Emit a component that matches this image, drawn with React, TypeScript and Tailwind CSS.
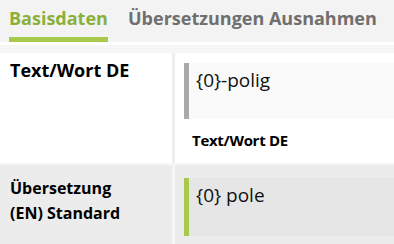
export default function App() {
  return (
    <div className="w-[394px] h-[244px] overflow-hidden bg-white" style={{ fontFamily: '"Open Sans", "Noto Sans", sans-serif' }}>
      <div className="h-[42px] bg-[#f3f3f3] flex items-stretch pl-[9px] gap-[20px]">
        <div className="flex flex-col justify-between w-[99px]">
          <div className="pt-[6px] text-[18px] leading-[24px] font-bold text-[#8bb03a] whitespace-nowrap">Basisdaten</div>
          <div className="h-[5px] bg-[#a8c94a]" />
        </div>
        <div className="pt-[6px] text-[18px] leading-[24px] font-bold text-[#6f6f6f] whitespace-nowrap">Übersetzungen Ausnahmen</div>
      </div>
      <div className="h-[3px] bg-white" />
      <div className="h-[8px] bg-[#f6f6f6]" />
      <div className="flex h-[110px] bg-white">
        <div className="w-[172px] pl-[10px] pt-[6px] text-[18px] leading-[22px] font-bold text-black">Text/Wort DE</div>
        <div className="w-[3px] bg-[#eeeeee]" />
        <div className="flex-1 pl-[9px] pt-[10px]">
          <div className="h-[56px] bg-[#fafafa] border-l-[5px] border-[#aaaaaa] pl-[7px] pt-[6px] text-[19px] leading-[22px] text-[#111]">{"{0}-polig"}</div>
          <div className="pl-[8px] pt-[12px] text-[15px] leading-[18px] font-bold text-black tracking-[-0.3px]">Text/Wort DE</div>
        </div>
      </div>
      <div className="h-[2px] bg-[#f6f6f6]" />
      <div className="flex h-[81px] bg-[#ececec]">
        <div className="w-[172px] pl-[10px] pt-[11px] text-[16px] leading-[25px] font-bold text-black">
          Übersetzung<br />(EN) Standard
        </div>
        <div className="w-[3px] bg-[#f5f5f5]" />
        <div className="flex-1 pl-[9px] pt-[13px]">
          <div className="h-[58px] bg-[#e6e6e6] border-l-[5px] border-[#a8c94a] pl-[7px] pt-[6px] text-[19px] leading-[22px] text-[#111]">{"{0} pole"}</div>
        </div>
      </div>
    </div>
  );
}
